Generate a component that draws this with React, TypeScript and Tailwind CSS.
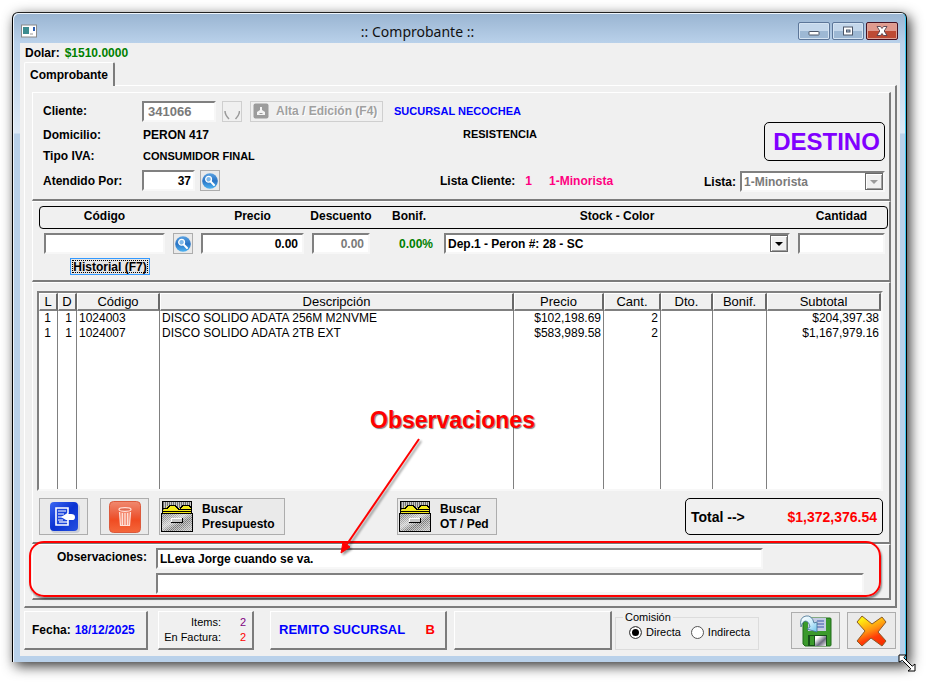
import React from 'react';

interface Item {
    l: number;
    d: number;
    code: string;
    description: string;
    price: string;
    qty: number;
    subtotal: string;
}

const items: Item[] = [
    { l: 1, d: 1, code: '1024003', description: 'DISCO SOLIDO ADATA 256M M2NVME', price: '$102,198.69', qty: 2, subtotal: '$204,397.38' },
    { l: 1, d: 1, code: '1024007', description: 'DISCO SOLIDO ADATA 2TB EXT', price: '$583,989.58', qty: 2, subtotal: '$1,167,979.16' },
];

const columns = [
    { title: 'L', width: 'w-[19px]' },
    { title: 'D', width: 'w-[19px]' },
    { title: 'Código', width: 'w-[83px]' },
    { title: 'Descripción', width: '' },
    { title: 'Precio', width: 'w-[90px]' },
    { title: 'Cant.', width: 'w-[57px]' },
    { title: 'Dto.', width: 'w-[52px]' },
    { title: 'Bonif.', width: 'w-[54px]' },
    { title: 'Subtotal', width: 'w-[114px]' },
];

// Classic bevels
const raised = 'border-t border-l border-r-2 border-b-2 border-t-white border-l-white border-r-[#7c7c7c] border-b-[#7c7c7c]';
const sunken = 'border-t-2 border-l-2 border-r-2 border-b-2 border-t-[#808080] border-l-[#808080] border-r-[#f7f7f7] border-b-[#f7f7f7]';
const field = `${sunken} h-[21px] min-w-0 bg-white px-1 text-xs font-bold outline-none`;
const flatButton = 'flex items-center border border-[#adadad] bg-[#eaeaea]';
const captionButton = 'flex h-[18px] w-8 items-center justify-center rounded-[2px] border';
const radio = 'm-0 size-[13px] appearance-none rounded-full border border-[#555] bg-white checked:bg-black checked:shadow-[inset_0_0_0_2px_#fff]';
const entryGrid = 'grid grid-cols-[121px_20px_103px_58px_58px_1fr_87px] gap-x-2';

const SearchIcon = () => (
    <svg viewBox="0 0 16 16" className="w-4 h-4">
        <defs>
            <linearGradient id="lens" x1="0" y1="0" x2="0" y2="1">
                <stop offset="0" stopColor="#5aa2e2" />
                <stop offset="0.5" stopColor="#2a74c4" />
                <stop offset="1" stopColor="#4fb4f2" />
            </linearGradient>
        </defs>
        <circle cx="8" cy="8" r="7.8" fill="url(#lens)" />
        <circle cx="6.6" cy="6.3" r="2.9" fill="#7fb8e8" stroke="#fff" strokeWidth="1.3" />
        <path d="M8.8 8.6L12 12" stroke="#fff" strokeWidth="2" strokeLinecap="round" />
    </svg>
);

const CabinetIcon = () => (
    <svg viewBox="0 0 32 32" className="w-8 h-8 shrink-0" shapeRendering="crispEdges">
        <defs>
            <pattern id="bars" width="2" height="2" patternUnits="userSpaceOnUse">
                <rect width="2" height="2" fill="#c8c8c8" />
                <rect width="1" height="2" fill="#707070" />
            </pattern>
            <pattern id="dither" width="2" height="2" patternUnits="userSpaceOnUse">
                <rect width="2" height="2" fill="#c4c4c4" />
                <rect width="1" height="1" fill="#707070" />
                <rect x="1" y="1" width="1" height="1" fill="#808080" />
            </pattern>
            <linearGradient id="sheen" x1="0" y1="0" x2="1" y2="1">
                <stop offset="0.1" stopColor="#fff" stopOpacity="0.1" />
                <stop offset="0.4" stopColor="#fff" stopOpacity="0.6" />
                <stop offset="0.6" stopColor="#fff" stopOpacity="0" />
                <stop offset="0.9" stopColor="#fff" stopOpacity="0.4" />
            </linearGradient>
        </defs>
        <rect x="1.5" y="0.5" width="29" height="12" fill="url(#bars)" stroke="#000" />
        <path d="M2 12V9l5-4h6l4 2h2l3-2h6l2 2v5z" fill="#f4ea1c" />
        <path d="M2 7.500h4l3-3h5l4 4h12M19 7.500l3-3h6l2 2M2 10.500h28" fill="none" stroke="#000" />
        <rect x="0.5" y="12.5" width="31" height="18" fill="url(#dither)" stroke="#000" />
        <rect x="1" y="13" width="30" height="17" fill="url(#sheen)" />
        <rect x="10" y="17" width="12" height="5" fill="#c8c8c8" />
        <path d="M10.500 21.500v-4h11" fill="none" stroke="#fff" />
        <path d="M10 21.500h11.500V17" fill="none" stroke="#000" />
    </svg>
);

const NoteIcon = () => (
    <svg viewBox="0 0 32 32" className="w-8 h-8">
        <defs>
            <linearGradient id="blue" x1="0" y1="0" x2="1" y2="1">
                <stop offset="0" stopColor="#3c68f2" />
                <stop offset="0.5" stopColor="#0a32d2" />
                <stop offset="1" stopColor="#2450e0" />
            </linearGradient>
        </defs>
        <rect x="3" y="3" width="29" height="29" rx="4" fill="#c9cdd8" />
        <rect x="2" y="1" width="28" height="29" rx="4" fill="url(#blue)" />
        <path d="M8 7h12v5l-3 4 3 3v5H8z" fill="#1c46dc" stroke="#fff" strokeWidth="1.6" />
        <path d="M10 10h8M10 13h6M10 16h5M10 19h5" stroke="#fff" strokeWidth="1.2" />
        <path d="M13 16l5-3h5q4 0 4 3.200t-4 2.800h-5z" fill="#fff" />
        <path d="M11 21h9" stroke="#fff" strokeWidth="1.2" />
    </svg>
);

const TrashIcon = () => (
    <svg viewBox="0 0 34 34" className="w-[34px] h-[34px]">
        <defs>
            <linearGradient id="red" x1="0" y1="0" x2="0" y2="1">
                <stop offset="0" stopColor="#f08a70" />
                <stop offset="0.45" stopColor="#ec5a38" />
                <stop offset="0.6" stopColor="#f04c22" />
                <stop offset="1" stopColor="#f4683c" />
            </linearGradient>
        </defs>
        <rect x="1.5" y="1.500" width="31" height="31" rx="4" fill="url(#red)" stroke="#dc5a3c" />
        <ellipse cx="17" cy="9.500" rx="6" ry="1.800" fill="#e06a50" stroke="#ffe0d8" strokeWidth="1.200" />
        <path d="M11.500 12l1 13.500h9l1-13.500" fill="#f58a70" stroke="#ffe0d8" strokeWidth="1.200" />
        <path d="M14.300 13v12M17 13v12M19.700 13v12" stroke="#ffe8e0" strokeWidth="1.200" />
    </svg>
);

const SaveIcon = () => (
    <svg viewBox="0 0 32 32" className="w-8 h-8">
        <defs>
            <linearGradient id="steel" x1="0" y1="0" x2="1" y2="1">
                <stop offset="0.2" stopColor="#fff" />
                <stop offset="0.6" stopColor="#6c6c80" />
                <stop offset="1" stopColor="#f2f2f2" />
            </linearGradient>
            <linearGradient id="arrow" x1="0" y1="0" x2="1" y2="1">
                <stop offset="0" stopColor="#fff" />
                <stop offset="0.5" stopColor="#d4f0fc" />
                <stop offset="1" stopColor="#6cc4ee" />
            </linearGradient>
        </defs>
        <path d="M3 3h27q1 0 1 1v26q0 1-1 1H5l-2-2z" fill="#3b9a2c" stroke="#1f6a18" />
        <rect x="8" y="3" width="18" height="13" fill="#c4cce4" />
        <path d="M17 6h7M17 9h7M17 12h7" stroke="#3858a8" strokeWidth="1.200" />
        <rect x="8" y="20" width="19" height="11" fill="#17501a" />
        <rect x="10" y="21" width="4" height="9" fill="#3b9a2c" />
        <rect x="15" y="21" width="11" height="10" fill="url(#steel)" />
        <path d="M1 12Q-1 2 6 1q6-1 8 7l3-1v10l-10-3 3-2Q9 6 5 6 2 7 1 12z" fill="url(#arrow)" stroke="#3f6f90" strokeWidth="0.800" strokeLinejoin="round" />
    </svg>
);

const CancelIcon = () => (
    <svg viewBox="0 0 32 32" className="w-8 h-8">
        <defs>
            <linearGradient id="fire" x1="0.2" y1="0" x2="0.6" y2="1">
                <stop offset="0.1" stopColor="#ffee10" />
                <stop offset="0.5" stopColor="#ff9010" />
                <stop offset="0.75" stopColor="#ff3c08" />
                <stop offset="1" stopColor="#f83000" />
            </linearGradient>
        </defs>
        <path d="M6 1L1 7l8 9-8 10 5 5 9-8 11 8 4-5-8-9 8-10-4-5-10 7z" fill="url(#fire)" stroke="#8a5a28" strokeWidth="1" strokeLinejoin="round" />
    </svg>
);

const CaptionButtons = () => (
    <div className="flex gap-[2px]">
        <button type="button" aria-label="Minimizar" className={`${captionButton} border-[#5c7699] bg-linear-to-b from-[#c4d7eb] from-50% to-[#9db8d4] to-50% shadow-[inset_0_0_0_1px_#d4e3f2]`}>
            <svg viewBox="0 0 12 10" className="w-3 h-[10px]"><rect x="1" y="5.5" width="10" height="3.500" rx="0.500" fill="#fff" stroke="#4c5668" /></svg>
        </button>
        <button type="button" aria-label="Maximizar" className={`${captionButton} border-[#5c7699] bg-linear-to-b from-[#c4d7eb] from-50% to-[#9db8d4] to-50% shadow-[inset_0_0_0_1px_#d4e3f2]`}>
            <svg viewBox="0 0 12 10" className="w-3 h-[10px]">
                <rect x="1.500" y="1" width="9" height="8" fill="#fff" stroke="#4c5668" />
                <rect x="4.500" y="4" width="3.500" height="2" fill="#a8c0da" stroke="#4c5668" />
            </svg>
        </button>
        <button type="button" aria-label="Cerrar" className={`${captionButton} border-[#471020] bg-linear-to-b from-[#e09a8e] from-50% to-[#bd4a34] to-50% shadow-[inset_0_0_0_1px_#dda398]`}>
            <svg viewBox="0 0 12 10" className="w-3 h-[10px]">
                <path d="M1 0.500h3.500L6 2.500l1.500-2H11L8.200 5 11 9.500H7.500L6 7.500l-1.500 2H1L3.800 5z" fill="#fff" stroke="#54404c" strokeWidth="0.900" />
            </svg>
        </button>
    </div>
);

interface ComboProps {
    id: string;
    label: string;
    value: string;
    disabled?: boolean;
    className?: string;
}

const Combo: React.FC<ComboProps> = ({ id, label, value, disabled, className }) => (
    <div className={`relative ${className || ''}`}>
        <select
            id={id}
            aria-label={label}
            disabled={disabled}
            className={`${sunken} block h-[21px] w-full appearance-none bg-white pl-[2px] text-xs font-bold text-black opacity-100 outline-none disabled:text-[#7a7a7a]`}
        >
            <option>{value}</option>
        </select>
        <div className="pointer-events-none absolute top-[2px] right-[2px] flex h-[17px] w-[18px] items-center justify-center border border-[#696969] bg-[#f0f0f0] shadow-[inset_1px_1px_#fff,inset_-1px_-1px_#a0a0a0]">
            <svg viewBox="0 0 8 4" className="h-1 w-2"><path d="M0 0h8L4 4z" fill={disabled ? '#9a9a9a' : '#000'} /></svg>
        </div>
    </div>
);

const ClientPanel = () => (
    <section className={`${raised} flex items-start justify-between pt-[6px] pr-1 pb-1 pl-[10px]`}>
        <div className="grid grid-cols-[99px_1fr] grid-rows-[24px_23px_20px_29px] items-center">
            <label htmlFor="cliente">Cliente:</label>
            <div className="flex items-center">
                <input id="cliente" defaultValue="341066" disabled className={`${sunken} h-[21px] w-[74px] bg-white px-1 text-[13px] font-bold text-[#7a7a7a]`} />
                <button type="button" aria-label="Buscar cliente" disabled className="ml-[6px] flex h-[21px] w-5 items-end justify-center border border-[#cfcfcf]">
                    <svg viewBox="0 0 16 16" className="w-4 h-4"><path d="M1 6q0 4 4 8M15.500 6q0 4-4 8" fill="none" stroke="#9a9a9a" strokeWidth="1.500" /></svg>
                </button>
                <button type="button" disabled className="ml-2 flex h-[21px] w-[133px] items-center gap-[7px] border border-[#cfcfcf] pl-[2px] text-[#a0a0a0] [text-shadow:1px_1px_#fff]">
                    <svg viewBox="0 0 16 16" className="w-4 h-4">
                        <rect x="0.500" y="0.500" width="15" height="15" rx="2" fill="#9c9c9c" />
                        <path d="M7 4h2v3l3 2v3H4V9l3-2z" fill="#f4f4f4" />
                        <path d="M6.500 10.500h3" stroke="#9c9c9c" />
                    </svg>
                    Alta / Edición (F4)
                </button>
                <span className="ml-[11px] text-[11px] text-[#0000ff]">SUCURSAL NECOCHEA</span>
            </div>
            <span>Domicilio:</span>
            <div className="grid grid-cols-[320px_1fr] pl-px">
                <span>PERON 417</span>
                <span className="text-[11px]">RESISTENCIA</span>
            </div>
            <span>Tipo IVA:</span>
            <span className="pl-px text-[11px]">CONSUMIDOR FINAL</span>
            <label htmlFor="atendido">Atendido Por:</label>
            <div className="flex items-center">
                <input id="atendido" defaultValue="37" className={`${field} w-[53px] pr-[2px] text-right`} />
                <button type="button" aria-label="Buscar vendedor" className="ml-[5px] flex h-[21px] w-5 items-center justify-center border border-[#adadad] bg-[#eaeaea]">
                    <SearchIcon />
                </button>
                <span className="ml-[220px]">Lista Cliente:</span>
                <span className="ml-[10px] text-[#ff0080]">1</span>
                <span className="ml-[17px] text-[#ff0080]">1-Minorista</span>
            </div>
        </div>
        <div className="flex flex-col items-end gap-[10px] pt-[23px]">
            <div className="flex h-[39px] w-[121px] items-center justify-center rounded-[5px] border border-black pl-1 text-2xl text-[#8000ff]">DESTINO</div>
            <div className="flex items-center gap-1">
                <label htmlFor="lista">Lista:</label>
                <Combo id="lista" label="Lista" value="1-Minorista" disabled className="w-[145px]" />
            </div>
        </div>
    </section>
);

const EntryPanel = () => (
    <section className={`${raised} pt-1 pr-px pb-[5px] pl-[6px]`}>
        <div className={`${entryGrid} h-[23px] rounded-[4px] border border-black pt-px pr-[2px] pl-1 text-center leading-4`}>
            <label htmlFor="codigo">Código</label>
            <span />
            <label htmlFor="precio">Precio</label>
            <label htmlFor="descuento" className="justify-self-center whitespace-nowrap">Descuento</label>
            <span className="pl-1">Bonif.</span>
            <label htmlFor="stock">Stock - Color</label>
            <label htmlFor="cantidad">Cantidad</label>
        </div>
        <div className={`${entryGrid} mt-1 items-center pr-[3px] pl-[5px]`}>
            <input id="codigo" className={field} />
            <button type="button" aria-label="Buscar código" className="flex h-[21px] w-5 items-center justify-center border border-[#adadad] bg-[#eaeaea]">
                <SearchIcon />
            </button>
            <input id="precio" defaultValue="0.00" className={`${field} text-right`} />
            <input id="descuento" defaultValue="0.00" disabled className={`${field} text-right text-[#7a7a7a]`} />
            <span className="pr-[3px] text-right text-[#008000]">0.00%</span>
            <Combo id="stock" label="Stock - Color" value="Dep.1 - Peron #: 28 - SC" />
            <input id="cantidad" className={field} />
        </div>
        <button type="button" className="mt-1 ml-[31px] flex h-[17px] w-20 items-center justify-center border border-[#3399ff] bg-[#e5e5e5] p-px">
            <span className="flex h-full w-full items-center justify-center border border-dotted border-black leading-3">Historial (F7)</span>
        </button>
    </section>
);

const ItemsTable = () => (
    <div className={`${sunken} bg-white`}>
        <table className="w-full table-fixed border-separate border-spacing-0 text-xs font-normal">
            <thead>
                <tr className="h-[18px] bg-[#f0f0f0] text-[13px] leading-[15px]">
                    {columns.map((col) => (
                        <th key={col.title} className={`${col.width} border-t border-r-2 border-b-2 border-l border-t-white border-r-[#696969] border-b-[#808080] border-l-white p-0 font-normal`}>
                            {col.title}
                        </th>
                    ))}
                </tr>
            </thead>
            <tbody>
                {items.map((item) => (
                    <tr key={item.code} className="leading-[15px] *:border-r *:border-[#808080] *:p-0 *:last:border-r-0">
                        <td className="text-right"><span className="pr-[6px]">{item.l}</span></td>
                        <td className="text-right"><span className="pr-1">{item.d}</span></td>
                        <td><span className="pl-[2px]">{item.code}</span></td>
                        <td><span className="pl-[2px]">{item.description}</span></td>
                        <td className="text-right"><span className="pr-[2px]">{item.price}</span></td>
                        <td className="text-right"><span className="pr-[2px]">{item.qty}</span></td>
                        <td />
                        <td />
                        <td className="text-right"><span className="pr-[2px]">{item.subtotal}</span></td>
                    </tr>
                ))}
                <tr className="h-[148px] *:border-r *:border-[#808080] *:last:border-r-0">
                    {columns.map((col) => <td key={col.title} />)}
                </tr>
            </tbody>
        </table>
    </div>
);

const ItemsPanel = () => (
    <section className={`${raised} pt-2 pr-[6px] pb-[7px] pl-1`}>
        <ItemsTable />
        <div className="mt-[7px] flex items-center pl-[2px]">
            <button type="button" aria-label="Nota" className={`${flatButton} h-[37px] w-[49px] justify-center`}><NoteIcon /></button>
            <button type="button" aria-label="Eliminar" className={`${flatButton} ml-3 h-[37px] w-[49px] justify-center`}><TrashIcon /></button>
            <button type="button" className={`${flatButton} ml-[10px] h-[37px] w-[126px] gap-[9px] pl-px text-left leading-[15px]`}>
                <CabinetIcon />
                <span>Buscar<br />Presupuesto</span>
            </button>
            <button type="button" className={`${flatButton} ml-28 h-[37px] w-[100px] gap-[9px] pl-px text-left leading-[15px]`}>
                <CabinetIcon />
                <span>Buscar<br />OT / Ped</span>
            </button>
            <div className="ml-auto flex h-[37px] w-[198px] items-center justify-between rounded-[5px] border border-black px-[5px] text-sm">
                <span>Total --&gt;</span>
                <span className="text-[#ff0000]">$1,372,376.54</span>
            </div>
        </div>
    </section>
);

const NotesPanel = () => (
    <section className={`${raised} relative flex pt-[3px] pr-[25px] pb-1 pl-6`}>
        <label htmlFor="obs1" className="w-[99px] leading-[18px]">Observaciones:</label>
        <div className="flex flex-1 flex-col gap-1">
            <input id="obs1" defaultValue="LLeva Jorge cuando se va." className={`${field} mr-[101px] pl-[2px]`} />
            <input aria-label="Observaciones, segunda línea" className={`${field} pl-[2px]`} />
        </div>

        {/* Callout */}
        <div className="pointer-events-none absolute -top-1 right-2 bottom-px -left-1 rounded-[15px] border-2 border-[#ff0000] shadow-[1px_2px_2px_rgba(0,0,0,0.45)]" />
        <div className="pointer-events-none absolute bottom-[164px] left-[337px] text-[23px] leading-7 text-[#ff0000] [text-shadow:1px_1px_1px_rgba(0,0,0,0.5)]">Observaciones</div>
        <svg viewBox="0 0 90 120" className="pointer-events-none absolute bottom-[42px] left-[303px] h-[120px] w-[90px] drop-shadow-[2px_2px_1px_rgba(0,0,0,0.4)]">
            <path d="M83 3L9 111" stroke="#ff0000" strokeWidth="2" />
            <path d="M5 117l2-11 7 5z" fill="#ff0000" stroke="#ff0000" />
        </svg>
    </section>
);

const BottomBar = () => (
    <footer className="mt-[3px] flex h-[39px] items-stretch">
        <div className={`${raised} flex w-[124px] items-center gap-1 pl-[7px]`}>
            <span>Fecha:</span>
            <span className="text-[#0000ff]">18/12/2025</span>
        </div>
        <div className={`${raised} ml-[10px] grid w-24 grid-cols-[62px_1fr] content-center pr-[6px] text-right text-[11px] leading-[15px] font-normal`}>
            <span>Items:</span>
            <span className="text-[#800080]">2</span>
            <span>En Factura:</span>
            <span className="text-[#ff0000]">2</span>
        </div>
        <div className={`${raised} ml-4 flex w-[177px] items-center justify-between pr-[10px] pl-2 text-[13px]`}>
            <span className="text-[#0000ff]">REMITO SUCURSAL</span>
            <span className="text-[#ff0000]">B</span>
        </div>
        <div className={`${raised} ml-[7px] flex-1`} />
        <fieldset className="ml-[3px] w-[144px] border border-[#dcdcdc] pl-[13px] text-[11px] font-normal">
            <legend className="-ml-[6px] px-[2px] leading-3">Comisión</legend>
            <div className="flex items-center gap-[10px] pt-[2px]">
                <label className="flex items-center gap-1"><input type="radio" name="comision" defaultChecked className={radio} />Directa</label>
                <label className="flex items-center gap-1"><input type="radio" name="comision" className={radio} />Indirecta</label>
            </div>
        </fieldset>
        <button type="button" aria-label="Guardar" className={`${flatButton} mt-px ml-8 h-[37px] w-[49px] justify-center`}><SaveIcon /></button>
        <button type="button" aria-label="Cancelar" className={`${flatButton} mt-px mr-px ml-[7px] h-[37px] w-[49px] justify-center`}><CancelIcon /></button>
    </footer>
);

export default function App() {
    return (
        <div className="bg-white pt-3 pr-6 pb-[23px] pl-3 font-['Liberation_Sans',Arial,sans-serif] text-xs font-bold text-black">
            <div className="relative rounded-t-[6px] border-t border-r border-l border-t-[#222] border-r-black border-l-black bg-[linear-gradient(to_bottom,#99b4d1_0px,#b9d1ea_30px,#dde9f6_120px,#b9d1ea_121px)] pr-[6px] pb-[6px] pl-[7px] shadow-[3px_4px_13px_rgba(0,0,0,0.8),inset_1px_1px_0_#eef5fc,inset_-1px_0_0_#3cc8f0]">
                <header className="grid h-[30px] grid-cols-[auto_1fr_auto] items-center">
                    <svg viewBox="0 0 16 14" className="ml-px mt-[5px] h-[14px] w-4">
                        <rect x="0.500" y="1" width="15" height="12" fill="#fff" stroke="#8a8a8a" />
                        <rect x="2" y="3" width="6" height="7" fill="#3c8c90" />
                        <rect x="12" y="3" width="2" height="4" fill="#2c5cb0" />
                        <rect x="9" y="9" width="3" height="2" fill="#ccc" />
                    </svg>
                    <h1 className="mt-[7px] text-center font-['Noto_Sans',sans-serif] text-sm font-normal text-[#111]">:: Comprobante ::</h1>
                    <div className="mt-[5px] mr-[2px]"><CaptionButtons /></div>
                </header>

                <main className="bg-[#f0f0f0] pr-[3px] pb-[6px] pl-1">
                    <div className="flex h-[19px] items-center gap-[5px] pl-px">
                        <span>Dolar:</span>
                        <span className="text-[#008000]">$1510.0000</span>
                    </div>
                    <div role="tablist" className="flex">
                        <button type="button" role="tab" aria-selected="true" className="relative -mb-px h-6 rounded-t-[2px] border-t border-r-2 border-l border-t-white border-r-[#7c7c7c] border-l-white bg-[#f0f0f0] px-[5px]">Comprobante</button>
                    </div>
                    <div className={`${raised} pt-[6px] pr-1 pb-[6px] pl-[7px]`}>
                        <ClientPanel />
                        <EntryPanel />
                        <ItemsPanel />
                        <NotesPanel />
                    </div>
                    <BottomBar />
                </main>

                {/* Resize pointer */}
                <svg viewBox="0 0 18 18" className="pointer-events-none absolute -right-[10px] -bottom-[10px] h-[18px] w-[18px]">
                    <path d="M1 1h7L5.800 3.800l8.400 8.400L17 10v7h-7l2.800-2.200-8.400-8.400L1 8z" fill="#fff" stroke="#000" strokeWidth="1" />
                </svg>
            </div>
        </div>
    );
}
